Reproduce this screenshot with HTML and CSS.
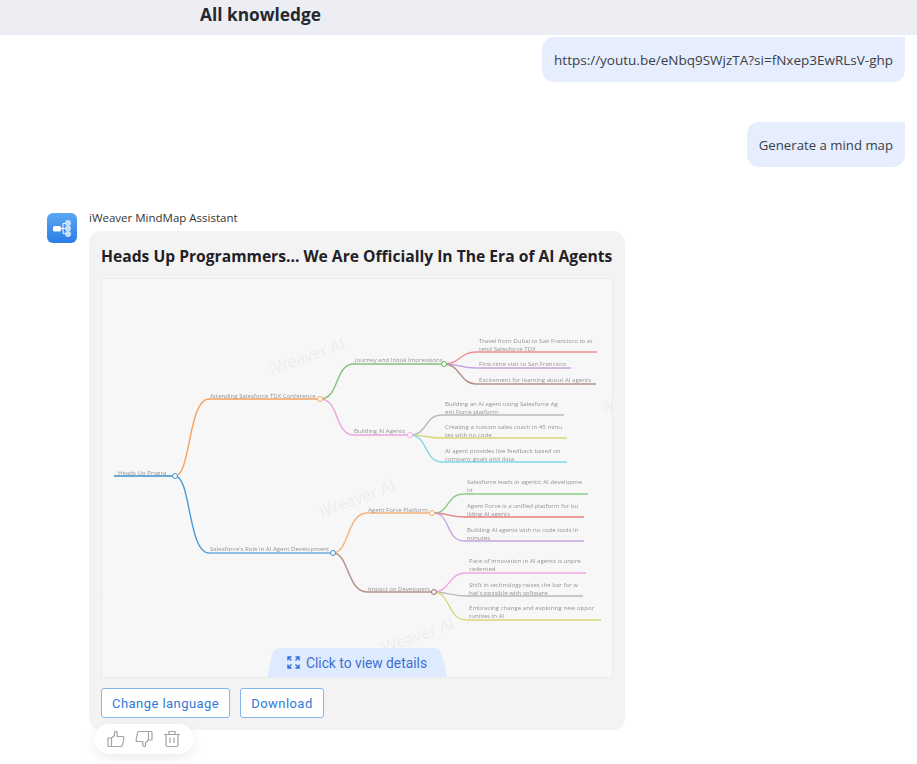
FILE: index.html
```html
<!DOCTYPE html>
<html lang="en">
<head>
  <meta charset="UTF-8">
  <meta name="viewport" content="width=device-width, initial-scale=1.0">
  <title>All knowledge</title>
  <link rel="stylesheet" href="styles.css">
</head>
<body>
  <header class="topbar">
    <h1>All knowledge</h1>
  </header>

  <main class="chat">
    <div class="user-msg first"><p>https://youtu.be/eNbq9SWjzTA?si=fNxep3EwRLsV-ghp</p></div>
    <div class="user-msg second"><p>Generate a mind map</p></div>

    <div class="bot-msg">
      <div class="avatar">
        <svg width="30" height="30" viewBox="0 0 30 30">
          <rect x="6" y="13" width="8" height="5.5" rx="1.5" fill="#fff"/>
          <path d="M13 15.5h3M16 10.5v10M16 10.5h3M16 15.5h3M16 20.5h3" stroke="#fff" stroke-width="1" fill="none"/>
          <circle cx="21" cy="10" r="3" fill="#c6dffb"/>
          <circle cx="21" cy="15.5" r="3" fill="#c6dffb"/>
          <circle cx="21" cy="21" r="3" fill="#c6dffb"/>
        </svg>
      </div>
      <div class="bot-body">
        <div class="bot-name">iWeaver MindMap Assistant</div>
        <div class="card">
          <h2>Heads Up Programmers... We Are Officially In The Era of AI Agents</h2>
          <div class="preview">
            <svg class="mindmap" width="510" height="398" viewBox="102 279 510 398">
              <g class="watermark">
                <text transform="rotate(-20 272 375)" x="272" y="375">iWeaver AI</text>
                <text transform="rotate(-20 322 517)" x="322" y="517">iWeaver AI</text>
                <text transform="rotate(-20 381 655)" x="381" y="655">iWeaver AI</text>
                <text transform="rotate(-20 605 414)" x="605" y="414">iWeaver AI</text>
                <text transform="rotate(-20 30 620)" x="30" y="620">iWeaver AI</text>
              </g>
              <g class="links">
                <path stroke="#3d8fcb" stroke-width="2" d="M114 476H172"/>
                <path stroke="#f7a35c" d="M175 476C191 476 188 399 209 399H317"/>
                <path stroke="#4a9bd4" d="M175 476C191 476 188 553 209 553H331"/>
                <path stroke="#9dc3e6" stroke-width="1.6" d="M209 553H331"/>
                <path stroke="#83c47b" d="M320 399C340 399 334 364 354 364H442"/>
                <path stroke="#eda4dd" d="M320 399C340 399 334 435 354 435H408"/>
                <path stroke="#ee8f8f" d="M444 364C460 364 460 352 476 352H597"/>
                <path stroke="#c7a5e2" d="M444 364C460 364 460 368 476 368H571"/>
                <path stroke="#b5928a" d="M444 364C460 364 460 384 476 384H596"/>
                <path stroke="#bbbbbb" d="M410 435C428 435 424 415 442 415H564"/>
                <path stroke="#d8d87a" d="M410 435C428 435 424 438 442 438H567"/>
                <path stroke="#7fdbe6" d="M410 435C428 435 424 462 442 462H567"/>
                <path stroke="#f7b27a" d="M333 553C349 553 347 513 367 513H432"/>
                <path stroke="#b5928a" d="M333 553C349 553 347 592 367 592H432"/>
                <path stroke="#8fcb88" d="M434 513C450 513 446 494 464 494H588"/>
                <path stroke="#e88080" d="M434 513C450 513 446 517 464 517H584"/>
                <path stroke="#c7a5e2" d="M434 513C450 513 446 541 464 541H584"/>
                <path stroke="#f0a8de" d="M434 592C450 592 448 573 466 573H586"/>
                <path stroke="#bbbbbb" d="M434 592C450 592 448 596 466 596H583"/>
                <path stroke="#d8d87a" d="M434 592C450 592 448 620 466 620H601"/>
              </g>
              <g class="nodes">
                <circle cx="175" cy="476" r="2.5" stroke="#3d8fcb"/>
                <circle cx="320" cy="399" r="2.5" stroke="#f7a35c"/>
                <circle cx="333" cy="553" r="2.5" stroke="#3d8fcb"/>
                <circle cx="444" cy="364" r="2.5" stroke="#5cb452"/>
                <circle cx="410" cy="435" r="2.5" stroke="#eda4dd"/>
                <circle cx="432" cy="513" r="2.5" stroke="#f7a35c"/>
                <circle cx="434" cy="592" r="2.5" stroke="#9a6b60"/>
              </g>
              <g class="labels">
                <text x="118" y="475">Heads Up Progra</text>
                <text x="210" y="398">Attending Salesforce TDX Conference</text>
                <text x="210" y="551">Salesforce's Role in AI Agent Development</text>
                <text x="355" y="362">Journey and Initial Impressions</text>
                <text x="354" y="433">Building AI Agents</text>
                <text x="368" y="512">Agent Force Platform</text>
                <text x="368" y="591">Impact on Developers</text>
                <text x="479" y="343">Travel from Dubai to San Francisco to at</text>
                <text x="479" y="351">tend Salesforce TDX</text>
                <text x="479" y="366">First-time visit to San Francisco</text>
                <text x="479" y="382">Excitement for learning about AI agents</text>
                <text x="445" y="406">Building an AI agent using Salesforce Ag</text>
                <text x="445" y="414">ent Force platform</text>
                <text x="445" y="429">Creating a custom sales coach in 45 minu</text>
                <text x="445" y="437">tes with no code</text>
                <text x="445" y="453">AI agent provides live feedback based on</text>
                <text x="445" y="461">company goals and data</text>
                <text x="467" y="484">Salesforce leads in agentic AI developme</text>
                <text x="467" y="492">nt</text>
                <text x="467" y="508">Agent Force is a unified platform for bu</text>
                <text x="467" y="516">ilding AI agents</text>
                <text x="467" y="532">Building AI agents with no code tools in</text>
                <text x="467" y="540">minutes</text>
                <text x="469" y="563">Pace of innovation in AI agents is unpre</text>
                <text x="469" y="571">cedented</text>
                <text x="469" y="587">Shift in technology raises the bar for w</text>
                <text x="469" y="595">hat's possible with software</text>
                <text x="469" y="610">Embracing change and exploring new oppor</text>
                <text x="469" y="618">tunities in AI</text>
              </g>
            </svg>
            <div class="details-tab">
              <svg width="13" height="13" viewBox="0 0 13 13" fill="none" stroke="#2f6fd6" stroke-width="1.4">
                <path d="M1 4.5V1H4.5M1 1L4.5 4.5M12 4.5V1H8.5M12 1L8.5 4.5M1 8.5V12H4.5M1 12L4.5 8.5M12 8.5V12H8.5M12 12L8.5 8.5"/>
              </svg>
              <span>Click to view details</span>
            </div>
          </div>
          <div class="actions">
            <button>Change language</button>
            <button>Download</button>
          </div>
        </div>
        <div class="feedback">
          <svg width="18" height="18" viewBox="0 0 18 18" fill="none" stroke="#a3a3a3" stroke-width="1.2" stroke-linejoin="round">
            <path d="M1 8H4.5V16.5H2A1 1 0 0 1 1 15.5ZM4.5 8L7.5 5.5V2.5C7.5 1 10 1 10.2 3V6.5H15.5C16.8 6.5 17 7.5 16.8 8.5L15.5 15C15.3 16 14.8 16.5 14 16.5H4.5"/>
          </svg>
          <svg width="18" height="18" viewBox="0 0 18 18" fill="none" stroke="#a3a3a3" stroke-width="1.2" stroke-linejoin="round">
            <path d="M17 10H13.5V1.5H16A1 1 0 0 1 17 2.5ZM13.5 10L10.5 12.5V15.5C10.5 17 8 17 7.8 15V11.5H2.5C1.2 11.5 1 10.5 1.2 9.5L2.5 3C2.7 2 3.2 1.5 4 1.5H13.5"/>
          </svg>
          <svg width="18" height="18" viewBox="0 0 18 18" fill="none" stroke="#a3a3a3" stroke-width="1.2" stroke-linecap="round" stroke-linejoin="round">
            <path d="M1.5 4.5H16.5M6 4.5V1.5H12V4.5M3 4.5V15A1.5 1.5 0 0 0 4.5 16.5H13.5A1.5 1.5 0 0 0 15 15V4.5M7 8V12.5M11 8V12.5"/>
          </svg>
        </div>
      </div>
    </div>
  </main>
</body>
</html>
```

FILE: styles.css
```css
* {
  box-sizing: border-box;
}
html, body {
  margin: 0;
  height: 100%;
  overflow: hidden;
}
body {
  font-family: "Open Sans", "Noto Sans", sans-serif;
  background: #fff;
  color: #2b2f36;
}
.topbar {
  height: 35px;
  background: #eceef3;
  padding-left: 200px;
}
.topbar h1 {
  margin: 0;
  font-size: 17.3px;
  line-height: 29px;
  font-weight: 700;
  color: #25282d;
}
.chat {
  padding: 2px 12px 0 47px;
}
.user-msg {
  display: flex;
  justify-content: flex-end;
}
.user-msg p {
  margin: 0;
  background: #e6edfd;
  border-radius: 12px 0 12px 12px;
  padding: 0 12px;
  height: 45px;
  line-height: 46px;
  font-size: 13.5px;
  color: #3a3f48;
}
.user-msg.second {
  margin-top: 40px;
}
.user-msg.second p {
  font-size: 13.2px;
}
.bot-msg {
  display: flex;
  gap: 12px;
  margin-top: 46px;
}
.avatar {
  width: 30px;
  height: 30px;
  border-radius: 6px;
  background: linear-gradient(#5aa7f2, #2a7de6);
  flex: none;
}
.bot-body {
  width: 536px;
}
.bot-name {
  font-size: 11.5px;
  line-height: 16px;
  color: #333;
  margin-bottom: 5px;
  margin-top: -3px;
}
.card {
  background: #f3f3f3;
  border-radius: 12px;
  padding: 12px;
  height: 499px;
}
.card h2 {
  margin: 0 0 9px;
  font-size: 15.65px;
  line-height: 26px;
  font-weight: 700;
  color: #1f2126;
  white-space: nowrap;
}
.preview {
  position: relative;
  width: 512px;
  height: 400px;
  background: #f7f7f7;
  border: 1px solid #ececec;
}
.mindmap {
  display: block;
  filter: blur(0.3px);
}
.links path {
  fill: none;
  stroke-width: 1.4;
}
.nodes circle {
  fill: #fff;
  stroke-width: 1;
}
.labels text {
  font-family: "Open Sans", sans-serif;
  font-size: 6.1px;
  fill: #979393;
}
.watermark text {
  font-family: "Open Sans", sans-serif;
  font-size: 16px;
  fill: #ececec;
}
.details-tab {
  position: absolute;
  left: 165px;
  bottom: 0;
  width: 180px;
  height: 29px;
  background: #deebff;
  clip-path: path("M0 29L5 7Q6.5 0 13 0H167Q173.5 0 175 7L180 29Z");
  display: flex;
  align-items: center;
  justify-content: center;
  gap: 6px;
  font-size: 13.8px;
  font-family: Roboto, sans-serif;
  color: #3f6fd0;
}
.actions {
  display: flex;
  gap: 10px;
  margin-top: 10px;
}
.actions button {
  height: 30px;
  padding: 0 10px;
  font-family: Roboto, sans-serif;
  font-size: 13px;
  letter-spacing: 0.45px;
  color: #2f7ad6;
  background: #fff;
  border: 1px solid #85b7ee;
  border-radius: 3px;
}
.feedback {
  position: relative;
  margin: -6px 0 0 5px;
  width: 100px;
  height: 30px;
  border-radius: 15px;
  background: #fff;
  box-shadow: 0 4px 12px rgba(0, 0, 0, 0.08);
  display: flex;
  align-items: center;
  justify-content: center;
  gap: 10px;
}
```
